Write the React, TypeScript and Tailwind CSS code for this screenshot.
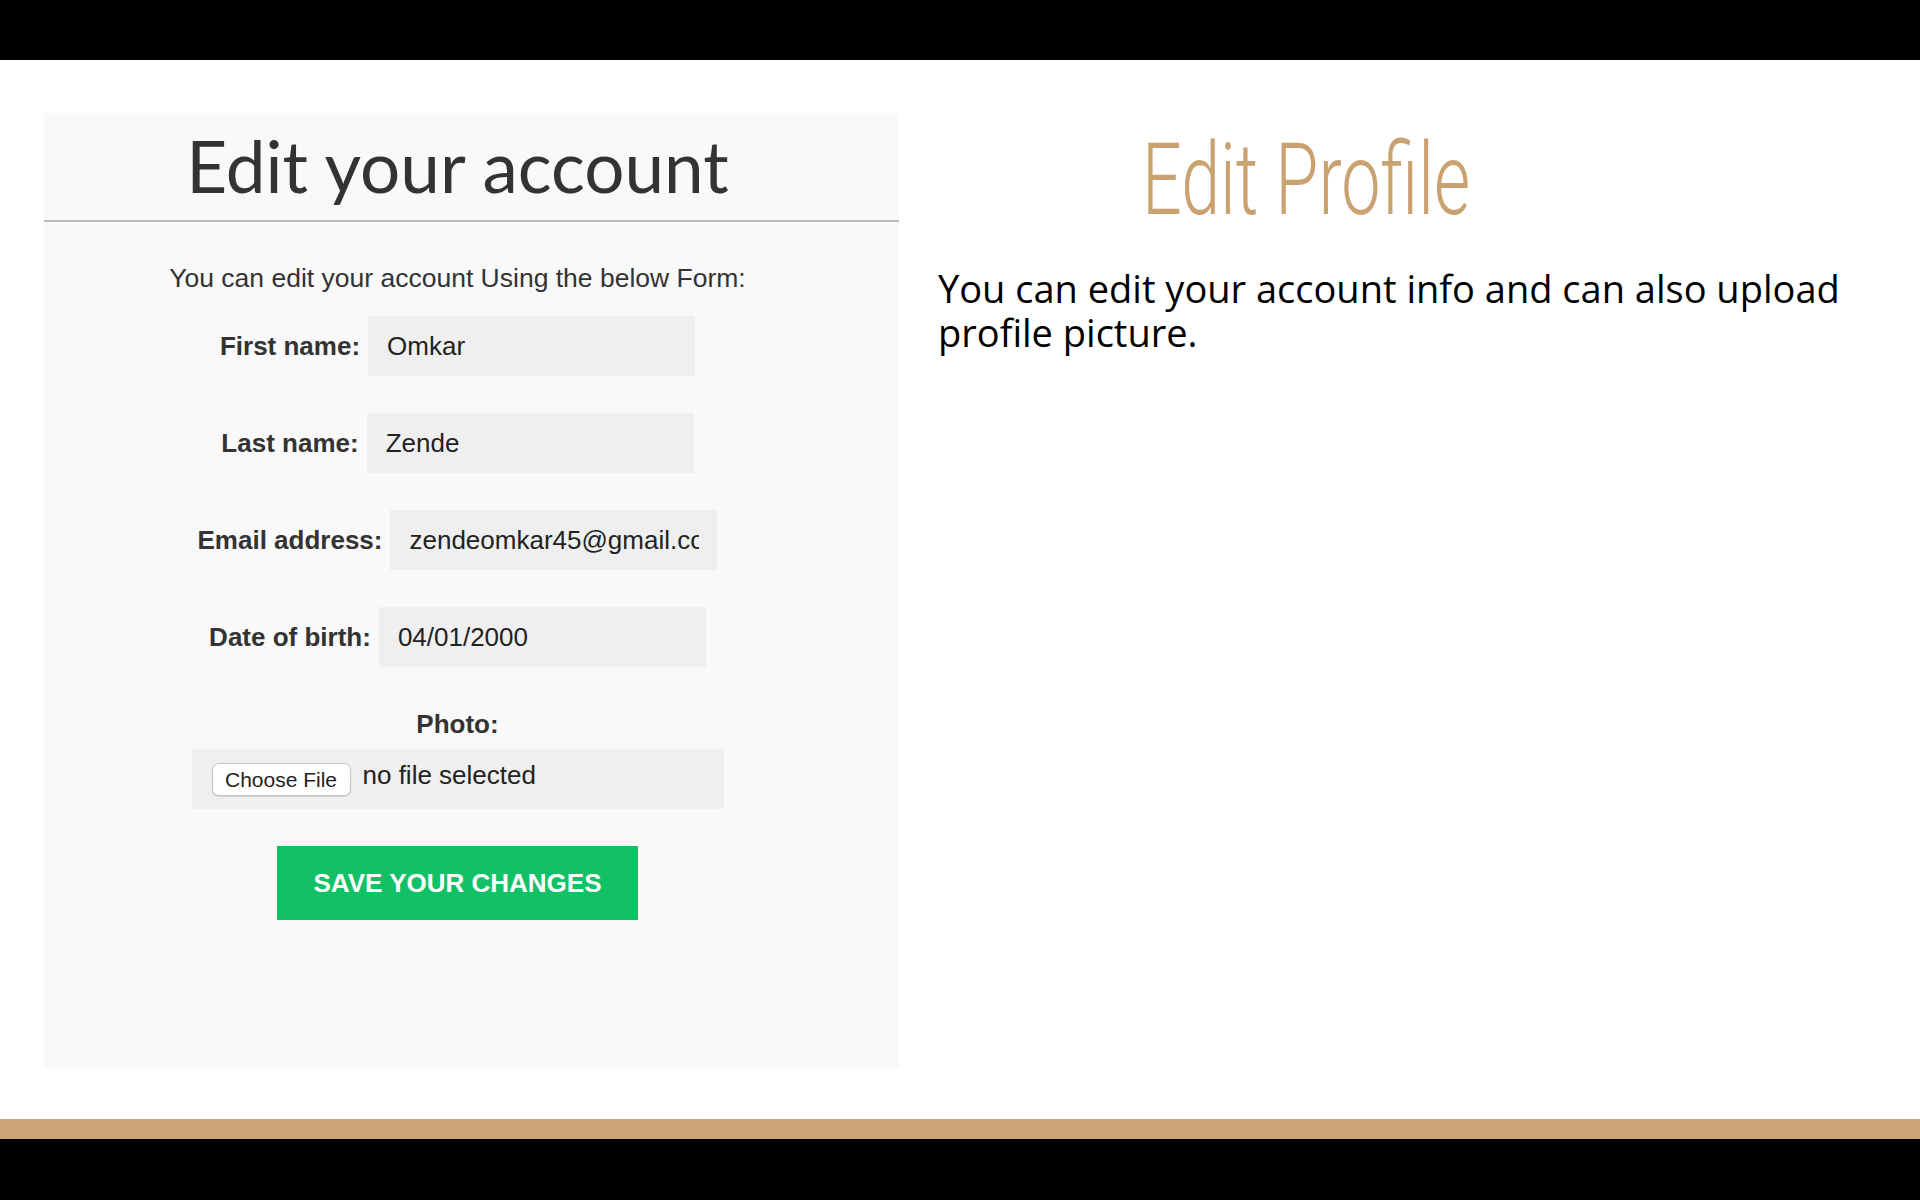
import React from "react";

const sans = "font-['Liberation_Sans',Arial,sans-serif]";

function Field({ label, value }: { label: string; value: string }) {
  return (
    <div className="flex items-center justify-center gap-[8px]">
      <label className="text-[26px] font-bold text-[#333]">{label}</label>
      <input
        readOnly
        value={value}
        className={`h-[60px] w-[327px] bg-[#efefef] pl-[19px] pr-[18px] text-[26px] text-[#222] outline-none ${sans}`}
      />
    </div>
  );
}

function EditForm() {
  return (
    <div className={`ml-[44px] h-[955px] w-[855px] bg-[#f9f9f9] ${sans}`}>
      <div className="h-[109px] border-b-2 border-[#bdbdbd] pr-[28px] pt-[17px]">
        <h1 className="text-center font-['Lato',sans-serif] text-[71px] leading-none text-[#333]">Edit your account</h1>
      </div>
      <div className="flex flex-col items-center pr-[28px]">
        <p className="mt-[41px] text-[26.5px] leading-[30px] text-[#333]">You can edit your account Using the below Form:</p>
        <div className="mt-[23px] flex flex-col gap-[37px]">
          <Field label="First name:" value="Omkar" />
          <Field label="Last name:" value="Zende" />
          <Field label="Email address:" value="zendeomkar45@gmail.com" />
          <Field label="Date of birth:" value="04/01/2000" />
        </div>
        <div className="mt-[42px] text-[26px] font-bold leading-[30px] text-[#333]">Photo:</div>
        <div className="mt-[10px] flex h-[60px] w-[532px] items-center bg-[#efefef] pl-[20px]">
          <button className="h-[33px] w-[139px] rounded-[7px] border border-[#c4c4c4] bg-white text-[21px] text-[#222] shadow-[0_1px_1px_rgba(0,0,0,0.12)]">
            Choose File
          </button>
          <span className="mb-[8px] ml-[12px] text-[26px] text-[#222]">no file selected</span>
        </div>
        <button className="mt-[37px] h-[74px] w-[361px] bg-[#12c166] text-[26px] font-bold text-white">
          SAVE YOUR CHANGES
        </button>
      </div>
    </div>
  );
}

function Intro() {
  return (
    <div className="ml-[39px] flex flex-col">
      <div className="ml-[204px] mt-[17px] h-[100px]">
        <h2 className="origin-left scale-x-[0.7] whitespace-nowrap font-['Roboto',sans-serif] text-[100px] font-light leading-none text-[#c9a270]">
          Edit Profile
        </h2>
      </div>
      <p className="mt-[36px] w-[940px] font-['Open_Sans',sans-serif] text-[38px] leading-[44px] text-black">
        You can edit your account info and can also upload profile picture.
      </p>
    </div>
  );
}

export default function App() {
  return (
    <div className="flex h-[1200px] w-full flex-col bg-white">
      <div className="h-[60px] bg-black" />
      <div className="flex flex-1 pt-[53px]">
        <EditForm />
        <Intro />
      </div>
      <div className="h-[20px] bg-[#cca577]" />
      <div className="h-[61px] bg-black" />
    </div>
  );
}
